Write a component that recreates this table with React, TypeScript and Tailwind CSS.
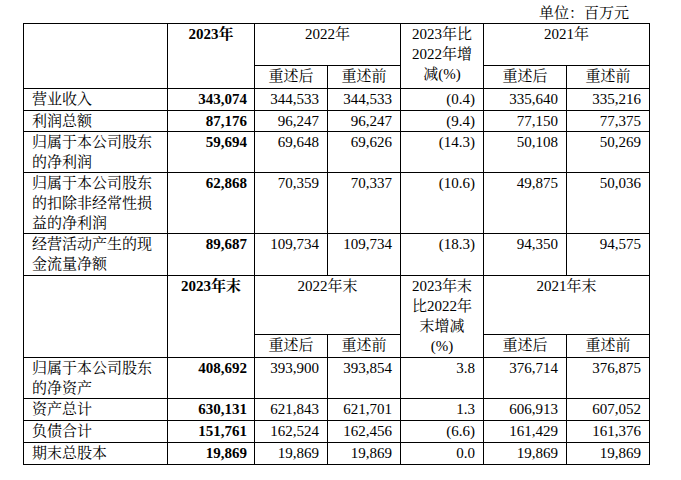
const font = "font-['Liberation_Serif','Noto_Serif_CJK_SC','Noto_Sans_CJK_SC',serif]"

type Row = { label: string[]; h: string; values: string[] }

const flowRows: Row[] = [
  { label: ['营业收入'], h: 'h-[22px]', values: ['343,074', '344,533', '344,533', '(0.4)', '335,640', '335,216'] },
  { label: ['利润总额'], h: 'h-[21px]', values: ['87,176', '96,247', '96,247', '(9.4)', '77,150', '77,375'] },
  {
    label: ['归属于本公司股东', '的净利润'],
    h: 'h-[41px]',
    values: ['59,694', '69,648', '69,626', '(14.3)', '50,108', '50,269'],
  },
  {
    label: ['归属于本公司股东', '的扣除非经常性损', '益的净利润'],
    h: 'h-[61px]',
    values: ['62,868', '70,359', '70,337', '(10.6)', '49,875', '50,036'],
  },
  {
    label: ['经营活动产生的现', '金流量净额'],
    h: 'h-[42px]',
    values: ['89,687', '109,734', '109,734', '(18.3)', '94,350', '94,575'],
  },
]

const stockRows: Row[] = [
  {
    label: ['归属于本公司股东', '的净资产'],
    h: 'h-[40px]',
    values: ['408,692', '393,900', '393,854', '3.8', '376,714', '376,875'],
  },
  { label: ['资产总计'], h: 'h-[22px]', values: ['630,131', '621,843', '621,701', '1.3', '606,913', '607,052'] },
  { label: ['负债合计'], h: 'h-[22px]', values: ['151,761', '162,524', '162,456', '(6.6)', '161,429', '161,376'] },
  { label: ['期末总股本'], h: 'h-[22px]', values: ['19,869', '19,869', '19,869', '0.0', '19,869', '19,869'] },
]

const cell = 'border border-black align-top p-0'

function Lines({ lines }: { lines: string[] }) {
  return (
    <>
      {lines.map((l, i) => (
        <div key={i}>{l}</div>
      ))}
    </>
  )
}

function Header({ year, change, rowH }: { year: string; change: string[]; rowH: string }) {
  return (
    <>
      <tr className={rowH}>
        <td rowSpan={2} className={cell} />
        <td rowSpan={2} className={`${cell} text-center font-bold`}>{year}</td>
        <td colSpan={2} className={`${cell} text-center`}>{year.replace('2023', '2022')}</td>
        <td rowSpan={2} className={`${cell} text-center`}>
          <Lines lines={change} />
        </td>
        <td colSpan={2} className={`${cell} text-center`}>{year.replace('2023', '2021')}</td>
      </tr>
      <tr className="h-[23px]">
        <td className={`${cell} text-center`}>重述后</td>
        <td className={`${cell} text-center`}>重述前</td>
        <td className={`${cell} text-center`}>重述后</td>
        <td className={`${cell} text-center`}>重述前</td>
      </tr>
    </>
  )
}

function Body({ rows }: { rows: Row[] }) {
  return (
    <>
      {rows.map((r) => (
        <tr key={r.label.join('')} className={r.h}>
          <td className={`${cell} pl-[8px]`}>
            <Lines lines={r.label} />
          </td>
          {r.values.map((v, i) => (
            <td key={i} className={`${cell} text-right ${i === 0 ? 'pr-[7px] font-bold' : 'pr-[8px]'}`}>
              {v}
            </td>
          ))}
        </tr>
      ))}
    </>
  )
}

export default function App() {
  return (
    <div className={`min-h-[480px] w-[681px] bg-white text-black ${font} text-[15px] leading-[20px]`}>
      <div className="ml-[23px] h-[23px] w-[626px] pr-[20px] pt-[3px] text-right">单位：百万元</div>
      <table className="ml-[23px] w-[626px] table-fixed border-collapse">
        <colgroup>
          <col className="w-[144px]" />
          <col className="w-[87px]" />
          <col className="w-[73px]" />
          <col className="w-[73px]" />
          <col className="w-[83px]" />
          <col className="w-[83px]" />
          <col className="w-[83px]" />
        </colgroup>
        <tbody>
          <Header year="2023年" change={['2023年比', '2022年增', '减(%)']} rowH="h-[42px]" />
          <Body rows={flowRows} />
          <Header year="2023年末" change={['2023年末', '比2022年', '末增减', '(%)']} rowH="h-[59px]" />
          <Body rows={stockRows} />
        </tbody>
      </table>
    </div>
  )
}
